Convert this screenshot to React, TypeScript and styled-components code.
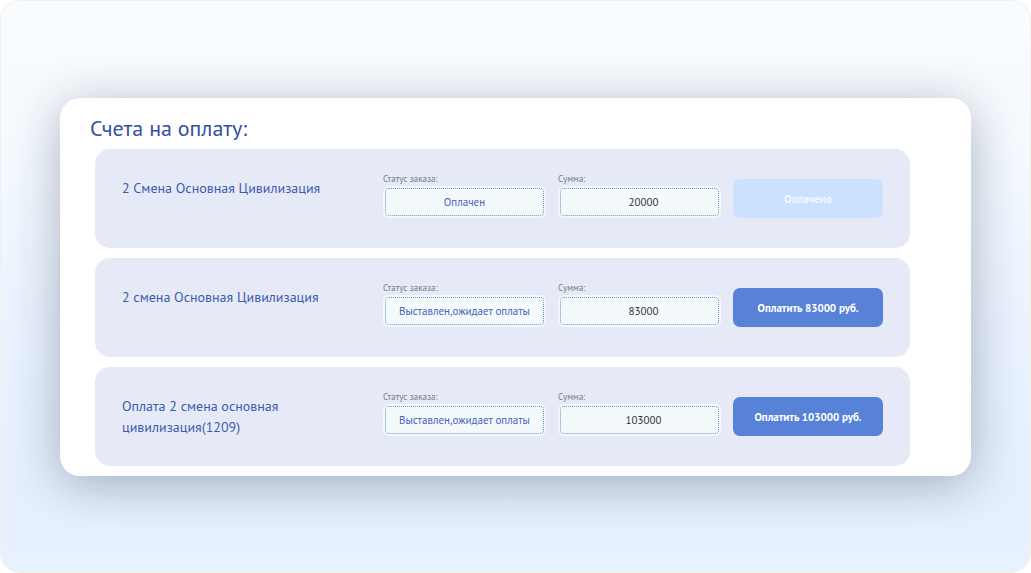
import React from "react";
import styled, { createGlobalStyle } from "styled-components";

const GlobalStyle = createGlobalStyle`
  *, *::before, *::after { box-sizing: border-box; }
  body {
    margin: 0;
    background: #ffffff;
    font-family: "PT Sans", "Noto Sans", sans-serif;
  }
`;

const Page = styled.main`
  min-height: 100vh;
  padding: 97px 59px 96px;
  border: 1px solid #f5f0e6;
  border-radius: 20px;
  background: linear-gradient(180deg, #f9fcff 0%, #f5faff 25%, #ebf3ff 55%, #e5efff 85%, #e7f1ff 100%);
`;

const Card = styled.section`
  padding: 16px 61px 10px 35px;
  border-radius: 20px;
  background: #ffffff;
  box-shadow: 0 8px 50px rgba(20, 30, 50, 0.32);
`;

const Title = styled.h1`
  margin: 0 0 7px -5px;
  color: #3450a3;
  font-size: 22px;
  font-weight: 400;
  line-height: 28px;
`;

const InvoiceList = styled.ul`
  display: flex;
  flex-direction: column;
  gap: 10px;
  margin: 0;
  padding: 0;
  list-style: none;
`;

const InvoiceRow = styled.li`
  display: grid;
  grid-template-columns: minmax(0, 1fr) 163px 163px 150px;
  column-gap: 12px;
  align-items: start;
  min-height: 99px;
  padding: 22px 27px;
  border-radius: 15px;
  background: #e6eaf6;
`;

const InvoiceName = styled.h2`
  max-width: 220px;
  margin: 7px 0 0;
  color: #3d5bb0;
  font-size: 14px;
  font-weight: 400;
  line-height: 21px;
`;

const Field = styled.label`
  display: flex;
  flex-direction: column;
  color: #7b7c82;
  font-size: 9px;
  line-height: 15px;
`;

const FieldFrame = styled.span`
  display: block;
  padding: 2px;
  border-radius: 6px;
  background: #f3f8fc;
`;

const FieldInput = styled.input<{ $accent?: boolean }>`
  display: block;
  width: 100%;
  height: 28px;
  padding: 0 4px;
  border: 1px dotted #6c97cf;
  border-radius: 4px;
  outline: none;
  background: #f4f9fc;
  color: ${({ $accent }) => ($accent ? "#4763b5" : "#333333")};
  font-family: inherit;
  font-size: 11px;
  text-align: center;
`;

const AmountInput = styled(FieldInput)`
  padding-left: 12px;
`;

const PayButton = styled.button`
  height: 39px;
  margin-top: 8px;
  padding: 0;
  border: 0;
  border-radius: 7px;
  background: #5882d7;
  color: #ffffff;
  font-family: inherit;
  font-size: 11px;
  font-weight: 700;
  cursor: pointer;

  &:disabled {
    background: #cce0ff;
    color: #f5f9ff;
    cursor: default;
  }
`;

interface Invoice {
  name: string;
  amount: number;
  paid: boolean;
}

const invoices: Invoice[] = [
  { name: "2 Смена Основная Цивилизация", amount: 20000, paid: true },
  { name: "2 смена Основная Цивилизация", amount: 83000, paid: false },
  { name: "Оплата 2 смена основная цивилизация(1209)", amount: 103000, paid: false },
];

export default function App() {
  return (
    <>
      <GlobalStyle />
      <Page>
        <Card>
          <Title>Счета на оплату:</Title>
          <InvoiceList>
            {invoices.map(({ name, amount, paid }) => (
              <InvoiceRow key={name}>
                <InvoiceName>{name}</InvoiceName>
                <Field>
                  Статус заказа:
                  <FieldFrame>
                    <FieldInput $accent readOnly value={paid ? "Оплачен" : "Выставлен,ожидает оплаты"} />
                  </FieldFrame>
                </Field>
                <Field>
                  Сумма:
                  <FieldFrame>
                    <AmountInput readOnly value={amount} />
                  </FieldFrame>
                </Field>
                <PayButton type="button" disabled={paid}>
                  {paid ? "Оплачено" : `Оплатить ${amount} руб.`}
                </PayButton>
              </InvoiceRow>
            ))}
          </InvoiceList>
        </Card>
      </Page>
    </>
  );
}
